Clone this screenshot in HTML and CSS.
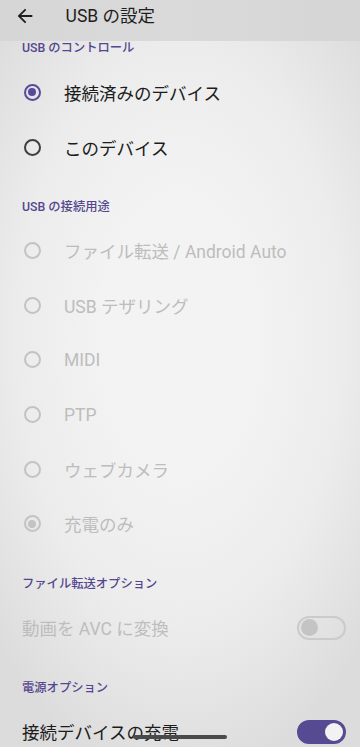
FILE: index.html
```html
<!DOCTYPE html>
<html lang="ja">
<head>
<meta charset="utf-8">
<meta name="viewport" content="width=360">
<link rel="stylesheet" href="styles.css">
</head>
<body>
<div class="screen">
  <header class="appbar">
    <svg class="back" viewBox="0 0 24 24"><path d="M20 11H7.83l5.59-5.59L12 4l-8 8 8 8 1.41-1.41L7.83 13H20v-2z"/></svg>
    <span class="title">USB の設定</span>
  </header>
  <main class="content">
    <div class="sec first">USB のコントロール</div>
    <div class="row r55"><span class="radio on"></span><span class="label">接続済みのデバイス</span></div>
    <div class="row r55"><span class="radio"></span><span class="label">このデバイス</span></div>

    <div class="sec">USB の接続用途</div>
    <div class="row rU dis"><span class="radio"></span><span class="label">ファイル転送 / Android Auto</span></div>
    <div class="row rU dis"><span class="radio"></span><span class="label">USB テザリング</span></div>
    <div class="row rU dis"><span class="radio"></span><span class="label">MIDI</span></div>
    <div class="row rU dis"><span class="radio"></span><span class="label">PTP</span></div>
    <div class="row rU dis"><span class="radio"></span><span class="label">ウェブカメラ</span></div>
    <div class="row rU dis"><span class="radio on"></span><span class="label">充電のみ</span></div>

    <div class="sec">ファイル転送オプション</div>
    <div class="srow dis"><span class="slabel">動画を AVC に変換</span><span class="switch"><span class="thumb"></span></span></div>

    <div class="sec">電源オプション</div>
    <div class="srow"><span class="slabel">接続デバイスの充電</span><span class="switch on"><span class="thumb"></span></span></div>
  </main>
  <div class="navbar"></div>
</div>
</body>
</html>
```
FILE: styles.css
```css
* { box-sizing: border-box; }
html, body { margin: 0; padding: 0; }
body {
  width: 360px;
  height: 747px;
  overflow: hidden;
  font-family: Roboto, "Noto Sans CJK JP", sans-serif;
  color: #1c1c1c;
}
.screen {
  position: relative;
  width: 360px;
  height: 747px;
  overflow: hidden;
  background: radial-gradient(ellipse 70% 60% at 50% 45%, #f3f3f3 30%, #ececec 65%, #dcdcdc 100%);
}
.appbar {
  height: 41px;
  display: flex;
  align-items: flex-start;
  padding-top: 5px;
  background: linear-gradient(90deg, #d6d6d6, #dadada 50%, #d5d5d5);
}
.back {
  width: 22px;
  height: 22px;
  margin-left: 13.6px;
  fill: #1e1e1e;
  flex: none;
}
.title {
  margin-left: 30px;
  font-size: 17.5px;
  line-height: 22px;
  color: #1e1e1e;
}
.content { display: flex; flex-direction: column; }
.sec {
  height: 20px;
  display: flex;
  align-items: center;
  padding-left: 22px;
  margin-top: 21.5px;
  margin-bottom: 7.5px;
  font-size: 12.3px;
  color: #54478f;
  font-weight: 500;
}
.sec.first {
  height: 12px;
  margin-top: 0;
  margin-bottom: 11.5px;
}
.row {
  display: flex;
  align-items: center;
  padding-left: 23.5px;
}
.r55 { height: 55px; }
.rU { height: 54.6px; }
.radio {
  width: 17px;
  height: 17px;
  border-radius: 50%;
  border: 2px solid #3e3e3e;
  display: flex;
  align-items: center;
  justify-content: center;
  flex: none;
}
.radio.on { border-color: #5a4a9c; }
.radio.on::after {
  content: "";
  width: 8.5px;
  height: 8.5px;
  border-radius: 50%;
  background: #5a4a9c;
}
.label {
  margin-left: 23.5px;
  font-size: 17.5px;
  color: #1c1c1c;
}
.dis .radio { border-color: #c3c3c3; }
.dis .radio.on::after { background: #c3c3c3; }
.dis .label, .dis .slabel { color: #bdbdbd; }
.srow {
  height: 55px;
  display: flex;
  align-items: center;
  justify-content: space-between;
  padding-left: 22px;
  padding-right: 14px;
}
.slabel { font-size: 17.5px; color: #1c1c1c; }
.switch {
  width: 49px;
  height: 24px;
  border-radius: 12px;
  border: 2px solid #cbcbcb;
  display: flex;
  align-items: center;
  padding: 0 1.5px;
  flex: none;
}
.switch .thumb {
  width: 17px;
  height: 17px;
  border-radius: 50%;
  background: #c4c4c4;
}
.switch.on {
  background: #564a93;
  border-color: #564a93;
  justify-content: flex-end;
}
.switch.on .thumb {
  width: 18px;
  height: 18px;
  background: #f2f2f2;
}
.navbar {
  position: absolute;
  left: 133px;
  top: 735px;
  width: 94px;
  height: 3.5px;
  border-radius: 2px;
  background: #4a4a4a;
}
```
